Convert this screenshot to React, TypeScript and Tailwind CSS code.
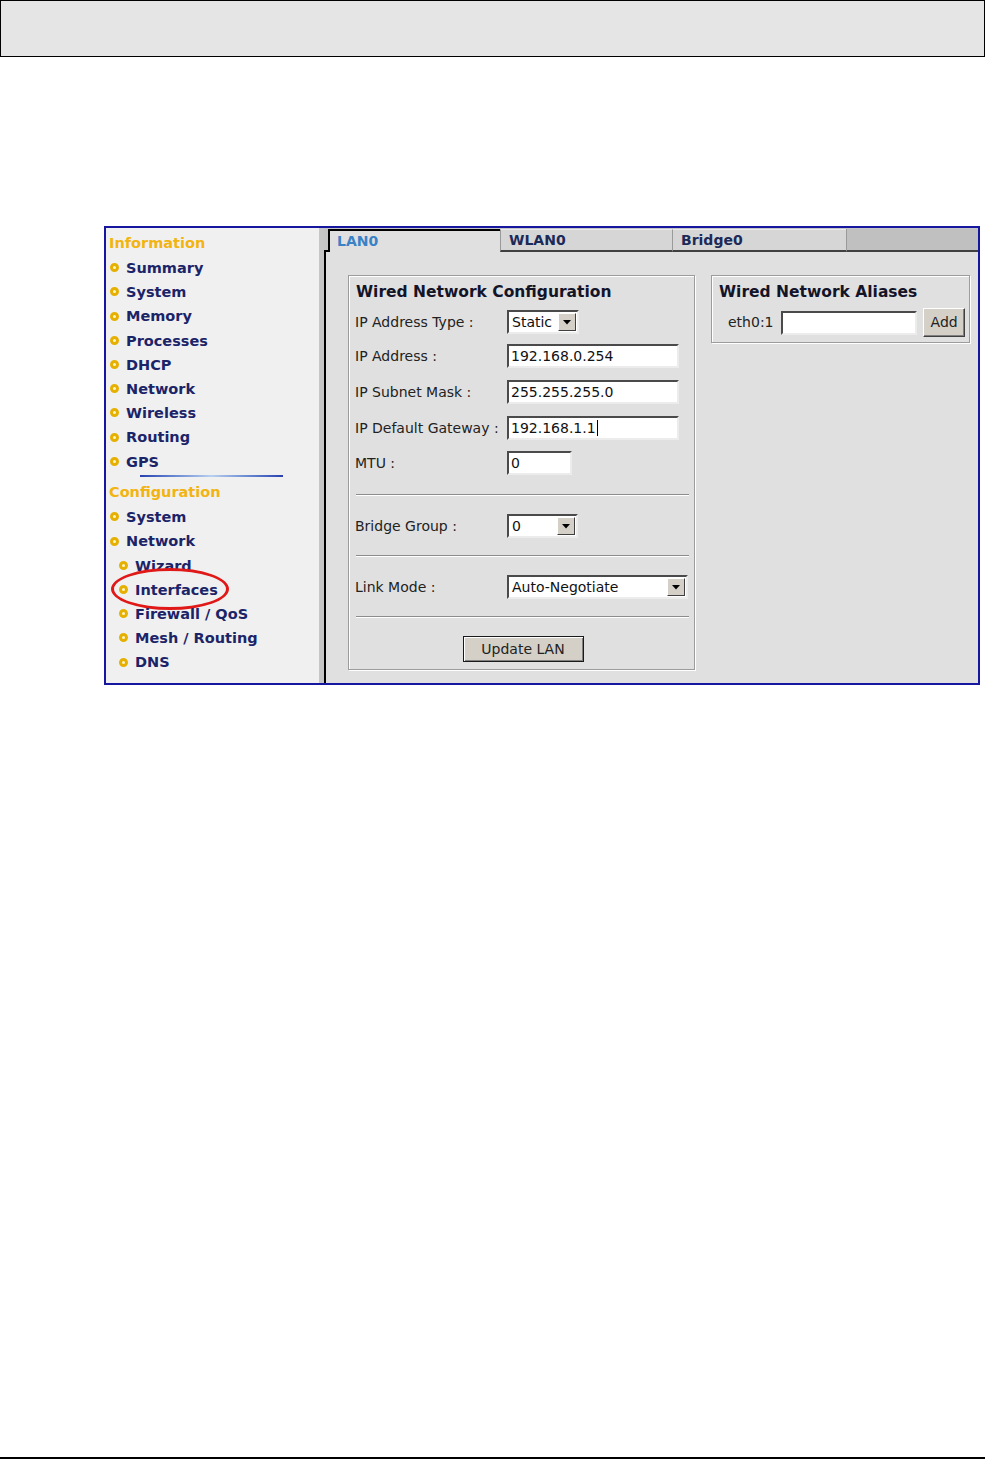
import React from "react";

const navFont = { fontFamily: '"DejaVu Sans", Verdana, sans-serif' };

type NavItem = { label: string; sub?: boolean; circled?: boolean };

const infoItems: NavItem[] = [
  { label: "Summary" },
  { label: "System" },
  { label: "Memory" },
  { label: "Processes" },
  { label: "DHCP" },
  { label: "Network" },
  { label: "Wireless" },
  { label: "Routing" },
  { label: "GPS" },
];

const configItems: NavItem[] = [
  { label: "System" },
  { label: "Network" },
  { label: "Wizard", sub: true },
  { label: "Interfaces", sub: true, circled: true },
  { label: "Firewall / QoS", sub: true },
  { label: "Mesh / Routing", sub: true },
  { label: "DNS", sub: true },
];

function Bullet() {
  return (
    <span className="mr-[7px] mb-[1px] inline-block h-[9px] w-[9px] shrink-0 rounded-full border-[3px] border-[#e6b000] bg-[#fff6c8]" />
  );
}

function NavRow({ item }: { item: NavItem }) {
  return (
    <div
      className={`relative flex h-[24.2px] items-center ${item.sub ? "pl-[13px]" : "pl-[4px]"}`}
    >
      <Bullet />
      <span className="text-[14.5px] font-bold leading-none text-[#1c2468]">{item.label}</span>
      {item.circled && (
        <span className="pointer-events-none absolute left-[5px] top-[-10px] h-[42px] w-[118px] rounded-[50%] border-[3px] border-[#e01818]" />
      )}
    </div>
  );
}

function Sidebar() {
  return (
    <div className="w-[213px] shrink-0 bg-[#f0f0f0] pt-[4px]" style={navFont}>
      <div className="flex h-[24.2px] items-center pl-[3px] text-[14.5px] font-bold text-[#f2b410]">
        Information
      </div>
      {infoItems.map((it) => (
        <NavRow key={"i" + it.label} item={it} />
      ))}
      <div className="h-[7.3px] pt-[1.5px] pl-[34px]">
        <div className="h-[1.5px] w-[143px] bg-gradient-to-r from-[#2a40b0] via-[#b8d0f0] to-[#2a40b0]" />
      </div>
      <div className="flex h-[24.2px] items-center pl-[3px] text-[14.5px] font-bold text-[#f2b410]">
        Configuration
      </div>
      {configItems.map((it) => (
        <NavRow key={"c" + it.label} item={it} />
      ))}
    </div>
  );
}

function TextBox({ value, width, caret }: { value: string; width: number; caret?: boolean }) {
  return (
    <div
      className="flex h-[24px] items-center border-2 border-t-[#4a4a4a] border-l-[#4a4a4a] border-b-[#ececec] border-r-[#ececec] bg-white pl-[2px] text-[14px] text-[#111]"
      style={{ width }}
    >
      <span>{value}</span>
      {caret && <span className="ml-[1px] inline-block h-[16px] w-[1px] bg-black" />}
    </div>
  );
}

function Arrow() {
  return (
    <div className="m-[1px] flex h-[18px] w-[18px] shrink-0 items-center justify-center border border-t-white border-l-white border-b-[#404040] border-r-[#404040] bg-[#d4d0c8]">
      <svg width="8" height="5" viewBox="0 0 8 5">
        <path d="M0 0 H8 L4 4.5 Z" fill="#000" />
      </svg>
    </div>
  );
}

function SelectBox({ value, width }: { value: string; width: number }) {
  return (
    <div
      className="flex h-[24px] items-center border-2 border-t-[#4a4a4a] border-l-[#4a4a4a] border-b-[#ececec] border-r-[#ececec] bg-white text-[14px] text-[#111]"
      style={{ width }}
    >
      <span className="flex-1 pl-[3px]">{value}</span>
      <Arrow />
    </div>
  );
}

function Row({ label, children, className }: { label: string; children: React.ReactNode; className: string }) {
  return (
    <div className={`flex items-center ${className}`}>
      <div className="w-[152px] shrink-0 text-[14px] text-[#222]">{label}</div>
      {children}
    </div>
  );
}

function Rule({ className }: { className: string }) {
  return <div className={`h-[2px] border-t border-[#8c8c8c] border-b border-b-white ${className}`} />;
}

const fieldset =
  "border border-[#9c9c9c] shadow-[inset_1px_1px_0_#ffffff,1px_1px_0_#ffffff]";

function LanForm() {
  return (
    <div className={`w-[347px] ${fieldset} pt-[7px] pr-[5px] pb-[7px] pl-[6px]`}>
      <div className="flex h-[20px] items-center pl-[1px] text-[15.5px] font-bold text-[#141428]">
        Wired Network Configuration
      </div>
      <Row label="IP Address Type :" className="mt-[7px] h-[24px]">
        <SelectBox value="Static" width={72} />
      </Row>
      <Row label="IP Address :" className="mt-[10px] h-[24px]">
        <TextBox value="192.168.0.254" width={172} />
      </Row>
      <Row label="IP Subnet Mask :" className="mt-[12px] h-[24px]">
        <TextBox value="255.255.255.0" width={172} />
      </Row>
      <Row label="IP Default Gateway :" className="mt-[12px] h-[24px]">
        <TextBox value="192.168.1.1" width={172} caret />
      </Row>
      <Row label="MTU :" className="mt-[11px] h-[24px]">
        <TextBox value="0" width={65} />
      </Row>
      <Rule className="mt-[19px] ml-[1px]" />
      <Row label="Bridge Group :" className="mt-[18px] h-[24px]">
        <SelectBox value="0" width={71} />
      </Row>
      <Rule className="mt-[17px] ml-[1px]" />
      <Row label="Link Mode :" className="mt-[18px] h-[24px]">
        <SelectBox value="Auto-Negotiate" width={181} />
      </Row>
      <Rule className="mt-[17px] ml-[1px]" />
      <div className="mt-[18px] flex justify-center pl-[2px]">
        <button className="h-[26px] w-[121px] border border-[#1a1a1a] bg-[#d4d0c8] text-[14px] text-[#222] shadow-[inset_1px_1px_0_#ffffff,inset_-1px_-1px_0_#808080]">
          Update LAN
        </button>
      </div>
    </div>
  );
}

function AliasForm() {
  return (
    <div className={`w-[259px] ${fieldset} pt-[7px] pr-[4px] pb-[5px] pl-[7px]`}>
      <div className="flex h-[20px] items-center text-[15.5px] font-bold text-[#141428]">
        Wired Network Aliases
      </div>
      <div className="mt-[5px] flex items-center">
        <span className="ml-[9px] w-[53px] text-[14px] text-[#222]">eth0:1</span>
        <TextBox value="" width={137} />
        <button className="ml-[6px] h-[29px] w-[42px] border border-t-white border-l-white border-b-[#404040] border-r-[#404040] bg-[#d4d0c8] text-[14px] text-[#222] shadow-[inset_-1px_-1px_0_#808080]">
          Add
        </button>
      </div>
    </div>
  );
}

function Tabs() {
  return (
    <div className="flex h-[24px] shrink-0 items-end bg-[#c4c4c4] text-[14px] font-bold" style={navFont}>
      <div className="h-[23px] w-[4px] border-b-2 border-black" />
      <div className="flex h-[23px] w-[172px] items-center border-l-2 border-t-2 border-black bg-[#e0e0e0] pl-[7px] text-[#3a82c6]">
        LAN0
      </div>
      <div className="flex h-[23px] w-[172px] items-center border-l border-t border-l-[#9a9a9a] border-t-[#ebebeb] border-b-2 border-b-[#404040] bg-[#d6d6d6] pl-[8px] text-[#1c2a58]">
        WLAN0
      </div>
      <div className="flex h-[23px] w-[174px] items-center border-l border-t border-l-[#9a9a9a] border-t-[#ebebeb] border-b-2 border-b-[#404040] bg-[#d6d6d6] pl-[8px] text-[#1c2a58]">
        Bridge0
      </div>
      <div className="h-[23px] flex-1 border-l border-l-[#9a9a9a] border-b-2 border-b-[#404040] bg-[#c0c0c0]" />
    </div>
  );
}

export default function App() {
  return (
    <div className="flex h-[1459px] w-[985px] flex-col bg-white" style={{ fontFamily: '"DejaVu Sans", Tahoma, sans-serif' }}>
      <div className="h-[57px] w-[985px] border border-black bg-[#e5e5e5]" />
      <div className="ml-[104px] mt-[169px] flex h-[459px] w-[876px] border-2 border-[#1616a0]">
        <Sidebar />
        <div className="w-[5px] shrink-0 bg-[#c6c6c6]" />
        <div className="flex flex-1 flex-col">
          <Tabs />
          <div className="flex flex-1 items-start gap-[16px] border-l-2 border-black bg-[#e0e0e0] pl-[22px] pt-[23px]">
            <LanForm />
            <AliasForm />
          </div>
        </div>
      </div>
      <div className="mt-auto h-[2px] w-full bg-black" />
    </div>
  );
}
